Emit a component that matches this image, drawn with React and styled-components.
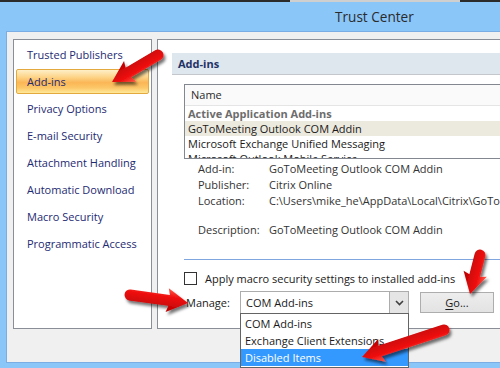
import React from "react";
import styled, { createGlobalStyle } from "styled-components";

const Global = createGlobalStyle`
  html, body { margin: 0; padding: 0; background: #8AC6F8; overflow: hidden; }
  * { box-sizing: border-box; }
`;

const FONT = `"Open Sans", "Noto Sans", "Liberation Sans", sans-serif`;

const Page = styled.div`
  position: relative;
  width: 500px;
  height: 368px;
  overflow: hidden;
  background: #8AC6F8;
  font-family: ${FONT};
  font-size: 11px;
`;

const TopStrip = styled.div`
  height: 2px;
  background: linear-gradient(to right, #2b2b2b 0 290px, #cfcfcf 290px 460px, #2b2b2b 460px);
`;

const TitleBar = styled.div`
  height: 29px;
  display: flex;
  align-items: center;
  padding-left: 335px;
  font-size: 13.6px;
  color: #2b2b2b;
  white-space: nowrap;
`;

const Dialog = styled.div`
  margin-left: 6px;
  width: 620px;
  height: 332px;
  border: 1px solid #79ADE4;
  border-right: none;
  background: #F0F0F0;
  padding: 7px 0 0 6px;
  display: flex;
  align-items: flex-start;
  gap: 5px;
`;

const Nav = styled.div`
  width: 139px;
  height: 290px;
  flex: none;
  background: #fff;
  border: 1px solid #8A8E97;
  padding: 2px;
  display: flex;
  flex-direction: column;
  gap: 2px;
`;

const NavItem = styled.div`
  height: 25px;
  display: flex;
  align-items: center;
  padding-left: 10px;
  color: #1E2A72;
  white-space: nowrap;
  border: 1px solid ${(p) => (p.$active ? "#E3A93F" : "transparent")};
  border-radius: 2px;
  background: ${(p) =>
    p.$active
      ? "linear-gradient(to bottom, #FEEFC8 0%, #FDD58A 30%, #FBB656 55%, #FCC869 78%, #FEE99A 100%)"
      : "transparent"};
`;

const Panel = styled.div`
  width: 460px;
  height: 290px;
  flex: none;
  background: #fff;
  border: 1px solid #8A8E97;
  position: relative;
`;

const SectionHeader = styled.div`
  margin: 13px 0 0 14px;
  height: 22px;
  line-height: 21px;
  padding-left: 6px;
  background: #DEE6EE;
  border-bottom: 1px solid #C4C8CC;
  font-weight: 700;
  color: #1F3366;
`;

const Body = styled.div`
  padding-left: 26px;
`;

const ListBox = styled.div`
  margin-top: 9px;
  height: 75px;
  border: 1px solid #828790;
  border-right: none;
  overflow: hidden;
  background: #fff;
`;

const ListHeader = styled.div`
  height: 21px;
  line-height: 20px;
  padding-left: 6px;
  background: #FAFAFA;
  border-bottom: 1px solid #E5E5E5;
  color: #2a2a2a;
`;

const ListRow = styled.div`
  height: 15px;
  line-height: 15px;
  padding-left: 3px;
  white-space: nowrap;
  color: ${(p) => (p.$group ? "#6D6D6D" : "#1a1a1a")};
  font-weight: ${(p) => (p.$group ? 700 : 400)};
  background: ${(p) => (p.$selected ? "#ECE9DE" : "transparent")};
`;

const Details = styled.div`
  margin-top: 2px;
  padding-left: 14px;
  display: grid;
  grid-template-columns: 71px auto;
  grid-template-rows: 16px 16px 16px 13px 16px;
  line-height: 16px;
  color: #333;
  white-space: nowrap;
`;

const Spacer = styled.div`
  grid-column: 1 / -1;
`;

const Separator = styled.div`
  margin-top: 21px;
  height: 1px;
  background: #7FA6DE;
`;

const CheckRow = styled.label`
  margin-top: 11px;
  display: flex;
  align-items: center;
  height: 14px;
  color: #1a1a1a;
  white-space: nowrap;
`;

const Box = styled.span`
  width: 13px;
  height: 13px;
  border: 1px solid #333;
  background: #fff;
  margin-right: 8px;
  flex: none;
`;

const ManageRow = styled.div`
  margin-top: 6px;
  display: flex;
  align-items: center;
  height: 23px;
`;

const ManageLabel = styled.span`
  width: 56px;
  padding-left: 2px;
  color: #1a1a1a;
`;

const SelectWrap = styled.div`
  position: relative;
  width: 169px;
  height: 23px;
`;

const Select = styled.div`
  height: 23px;
  border: 1px solid #ACACAC;
  background: #fff;
  display: flex;
  align-items: center;
  padding-left: 5px;
  color: #1a1a1a;
`;

const SelectValue = styled.span`
  flex: 1;
`;

const DropButton = styled.span`
  width: 19px;
  height: 21px;
  border-left: 1px solid #ACACAC;
  background: #E5E5E5;
  display: flex;
  align-items: center;
  justify-content: center;
`;

const DropList = styled.div`
  position: absolute;
  left: 0;
  top: 22px;
  width: 169px;
  border: 1px solid #646464;
  background: #fff;
  z-index: 5;
  padding: 1px 0;
`;

const DropItem = styled.div`
  height: 17px;
  line-height: 17px;
  padding-left: 4px;
  white-space: nowrap;
  color: ${(p) => (p.$active ? "#fff" : "#1a1a1a")};
  background: ${(p) => (p.$active ? "#3399FF" : "transparent")};
`;

const GoButton = styled.div`
  margin-left: 11px;
  width: 74px;
  height: 21px;
  border: 1px solid #ADADAD;
  background: linear-gradient(#EDEDED, #E3E3E3);
  display: flex;
  align-items: center;
  justify-content: center;
  color: #1a1a1a;
  u { text-decoration: underline; text-underline-offset: 2px; }
`;

const Overlay = styled.svg`
  position: absolute;
  left: 0;
  top: 0;
  pointer-events: none;
  z-index: 20;
`;

function Arrow({ x1, y1, x2, y2, w = 5.5, hw = 12, hl = 19 }) {
  const dx = x2 - x1;
  const dy = y2 - y1;
  const L = Math.hypot(dx, dy);
  const a = (Math.atan2(dy, dx) * 180) / Math.PI;
  const b = L - hl;
  const d = `M0 ${-w} L${b} ${-w} L${b - 2} ${-hw} L${L} 0 L${b - 2} ${hw} L${b} ${w} L0 ${w} A${w} ${w} 0 0 1 0 ${-w} Z`;
  return (
    <g filter="url(#arrowShadow)">
      <g transform={`translate(${x1} ${y1}) rotate(${a})`}>
        <path d={d} fill="url(#arrowGrad)" />
      </g>
    </g>
  );
}

function Chevron() {
  return (
    <svg width="9" height="6" viewBox="0 0 9 6">
      <path d="M1 1 L4.5 4.5 L8 1" fill="none" stroke="#404040" strokeWidth="1.6" />
    </svg>
  );
}

const navItems = [
  "Trusted Publishers",
  "Add-ins",
  "Privacy Options",
  "E-mail Security",
  "Attachment Handling",
  "Automatic Download",
  "Macro Security",
  "Programmatic Access",
];

export default function App() {
  return (
    <Page>
      <Global />
      <TopStrip />
      <TitleBar>Trust Center</TitleBar>
      <Dialog>
        <Nav>
          {navItems.map((n) => (
            <NavItem key={n} $active={n === "Add-ins"}>
              {n}
            </NavItem>
          ))}
        </Nav>
        <Panel>
          <SectionHeader>Add-ins</SectionHeader>
          <Body>
            <ListBox>
              <ListHeader>Name</ListHeader>
              <ListRow $group>Active Application Add-ins</ListRow>
              <ListRow $selected>GoToMeeting Outlook COM Addin</ListRow>
              <ListRow>Microsoft Exchange Unified Messaging</ListRow>
              <ListRow>Microsoft Outlook Mobile Service</ListRow>
            </ListBox>
            <Details>
              <span>Add-in:</span>
              <span>GoToMeeting Outlook COM Addin</span>
              <span>Publisher:</span>
              <span>Citrix Online</span>
              <span>Location:</span>
              <span>C:\Users\mike_he\AppData\Local\Citrix\GoToMeeting\</span>
              <Spacer />
              <span>Description:</span>
              <span>GoToMeeting Outlook COM Addin</span>
            </Details>
            <Separator />
            <CheckRow>
              <Box />
              Apply macro security settings to installed add-ins
            </CheckRow>
            <ManageRow>
              <ManageLabel>Manage:</ManageLabel>
              <SelectWrap>
                <Select>
                  <SelectValue>COM Add-ins</SelectValue>
                  <DropButton>
                    <Chevron />
                  </DropButton>
                </Select>
                <DropList>
                  <DropItem>COM Add-ins</DropItem>
                  <DropItem>Exchange Client Extensions</DropItem>
                  <DropItem $active>Disabled Items</DropItem>
                </DropList>
              </SelectWrap>
              <GoButton>
                <span>
                  <u>G</u>o...
                </span>
              </GoButton>
            </ManageRow>
          </Body>
        </Panel>
      </Dialog>
      <Overlay width="500" height="368" viewBox="0 0 500 368">
        <defs>
          <linearGradient id="arrowGrad" x1="0" y1="0" x2="0" y2="1">
            <stop offset="0" stopColor="#FF5A4A" />
            <stop offset="0.35" stopColor="#F01010" />
            <stop offset="1" stopColor="#B80000" />
          </linearGradient>
          <filter id="arrowShadow" x="-30%" y="-30%" width="160%" height="160%">
            <feDropShadow dx="2" dy="3" stdDeviation="1.6" floodColor="#000" floodOpacity="0.55" />
          </filter>
        </defs>
        <Arrow x1={158} y1={55} x2={112} y2={82} />
        <Arrow x1={130} y1={295} x2={188} y2={303} />
        <Arrow x1={480} y1={255} x2={470} y2={294} />
        <Arrow x1={444} y1={330} x2={362} y2={357} />
      </Overlay>
    </Page>
  );
}
